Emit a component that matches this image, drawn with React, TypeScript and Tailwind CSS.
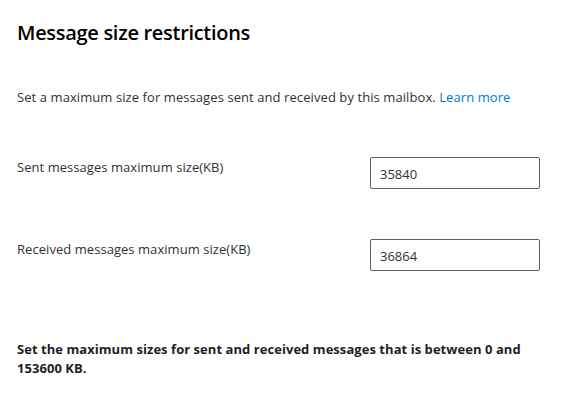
import React from 'react';

const font = { fontFamily: '"Open Sans", "Noto Sans", sans-serif' };

export default function App() {
  return (
    <div style={font} className="w-[562px] h-[409px] bg-white text-[#323130] px-[17px] flex flex-col">
      <h1 className="mt-[19px] text-[20px] leading-[28px] font-semibold text-black tracking-[-0.3px]">
        Message size restrictions
      </h1>

      <p className="mt-[40px] text-[13px] leading-[20px] tracking-[0.08px]">
        Set a maximum size for messages sent and received by this mailbox.{' '}
        <a href="#" className="text-[#0078d4]">Learn more</a>
      </p>

      <div className="mt-[50px] flex flex-col gap-[50px]">
        <div className="flex justify-between items-start pr-[5px]">
          <label className="text-[13px] leading-[20px] tracking-[0.05px]">Sent messages maximum size(KB)</label>
          <input
            defaultValue="35840"
            className="w-[170px] h-[32px] border border-[#605e5c] rounded-[2px] px-[9px] pt-[2px] text-[13px] text-[#323130] outline-none"
          />
        </div>
        <div className="flex justify-between items-start pr-[5px]">
          <label className="text-[13px] leading-[20px] tracking-[0.05px]">Received messages maximum size(KB)</label>
          <input
            defaultValue="36864"
            className="w-[170px] h-[32px] border border-[#605e5c] rounded-[2px] px-[9px] pt-[2px] text-[13px] text-[#323130] outline-none"
          />
        </div>
      </div>

      <p className="mt-[69px] w-[525px] text-[13px] leading-[19px] font-bold text-[#201f1e] tracking-[0.05px]">
        Set the maximum sizes for sent and received messages that is between 0 and 153600 KB.
      </p>
    </div>
  );
}
